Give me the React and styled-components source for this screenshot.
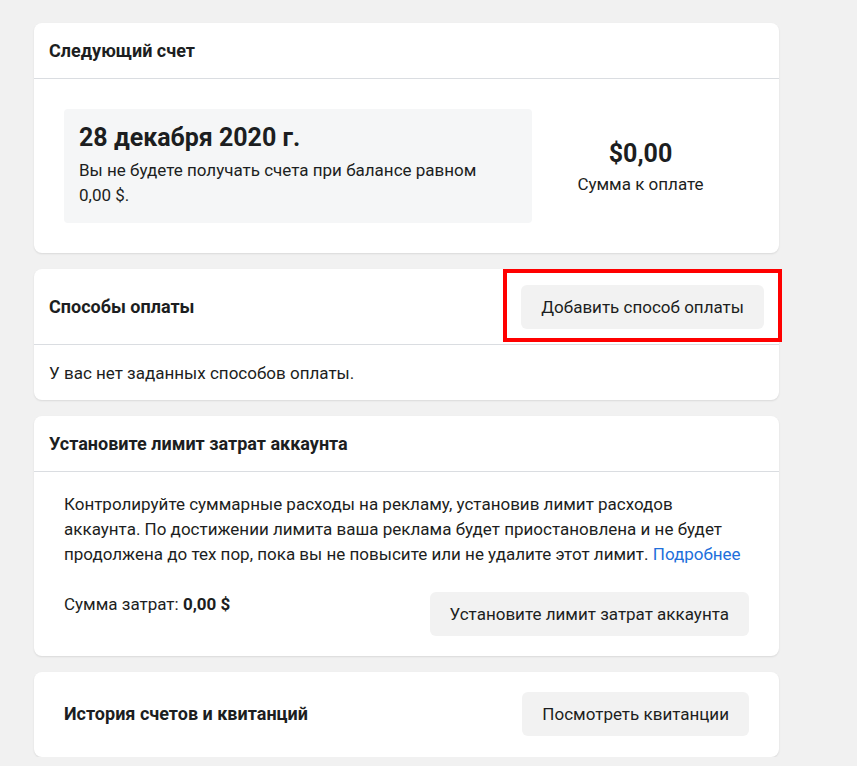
import React from "react";
import styled, { createGlobalStyle } from "styled-components";

const Global = createGlobalStyle`
  html, body { margin: 0; padding: 0; background: #f1f1f1; }
  body { font-family: Roboto, "Liberation Sans", Arial, sans-serif; color: #1c1e21; }
  * { box-sizing: border-box; }
`;

const Page = styled.div`
  padding: 23px 0 0 34px;
  width: 779px;
  display: flex;
  flex-direction: column;
  gap: 16px;
`;

const Card = styled.section`
  position: relative;
  background: #fff;
  border-radius: 8px;
  box-shadow: 0 1px 2px rgba(0, 0, 0, 0.1);
`;

const Header = styled.div`
  display: flex;
  align-items: center;
  justify-content: space-between;
  height: ${(p) => p.$h || 56}px;
  padding: 0 15px;
  border-bottom: 1px solid #dadde1;
`;

const Title = styled.h2`
  margin: 0;
  font-size: 18px;
  font-weight: 700;
  line-height: 22px;
  color: #1c1e21;
`;

const Button = styled.button`
  height: 44px;
  padding: 0 20px;
  border: none;
  border-radius: 6px;
  background: #f2f2f2;
  font-family: inherit;
  font-size: 17px;
  color: #1c1e21;
  flex-shrink: 0;
`;

const InvoiceBody = styled.div`
  display: flex;
  padding: 30px;
`;

const DateBox = styled.div`
  width: 468px;
  height: 114px;
  background: #f5f6f7;
  border-radius: 4px;
  padding: 14px 15px 0;
`;

const BigText = styled.div`
  font-size: 25px;
  font-weight: 700;
  line-height: 30px;
`;

const Text = styled.p`
  margin: ${(p) => p.$m || "0"};
  font-size: 17px;
  line-height: 25px;
  color: #1c1e21;
`;

const Amount = styled.div`
  flex: 1;
  display: flex;
  flex-direction: column;
  align-items: center;
  justify-content: center;
  gap: 3px;
  padding-top: 3px;
`;

const Plain = styled.div`
  padding: 16px 15px 14px;
`;

const LimitBody = styled.div`
  padding: 20px 30px 20px;
`;

const Row = styled.div`
  display: flex;
  justify-content: space-between;
  align-items: ${(p) => p.$align || "center"};
  margin-top: ${(p) => p.$mt || 0}px;
`;

const Link = styled.a`
  color: #216fdb;
  text-decoration: none;
`;

const HistoryRow = styled(Row)`
  padding: 20px 30px 21px;
`;

const Highlight = styled.div`
  position: absolute;
  left: 469px;
  top: 0;
  width: 279px;
  height: 73px;
  border: 4px solid #ff0000;
  pointer-events: none;
`;

export default function App() {
  return (
    <>
      <Global />
      <Page>
        <Card>
          <Header>
            <Title>Следующий счет</Title>
          </Header>
          <InvoiceBody>
            <DateBox>
              <BigText>28 декабря 2020 г.</BigText>
              <Text $m="5px 0 0">
                Вы не будете получать счета при балансе равном
                <br />
                0,00 $.
              </Text>
            </DateBox>
            <Amount>
              <BigText>$0,00</BigText>
              <Text>Сумма к оплате</Text>
            </Amount>
          </InvoiceBody>
        </Card>

        <Card>
          <Header $h={76}>
            <Title>Способы оплаты</Title>
            <Button>Добавить способ оплаты</Button>
          </Header>
          <Plain>
            <Text>У вас нет заданных способов оплаты.</Text>
          </Plain>
          <Highlight />
        </Card>

        <Card>
          <Header>
            <Title>Установите лимит затрат аккаунта</Title>
          </Header>
          <LimitBody>
            <Text>
              Контролируйте суммарные расходы на рекламу, установив лимит расходов
              <br />
              аккаунта. По достижении лимита ваша реклама будет приостановлена и не будет
              <br />
              продолжена до тех пор, пока вы не повысите или не удалите этот лимит.{" "}
              <Link href="#">Подробнее</Link>
            </Text>
            <Row $align="flex-start" $mt={25}>
              <Text>
                Сумма затрат: <b>0,00 $</b>
              </Text>
              <Button>Установите лимит затрат аккаунта</Button>
            </Row>
          </LimitBody>
        </Card>

        <Card>
          <HistoryRow>
            <Title>История счетов и квитанций</Title>
            <Button>Посмотреть квитанции</Button>
          </HistoryRow>
        </Card>
      </Page>
    </>
  );
}
